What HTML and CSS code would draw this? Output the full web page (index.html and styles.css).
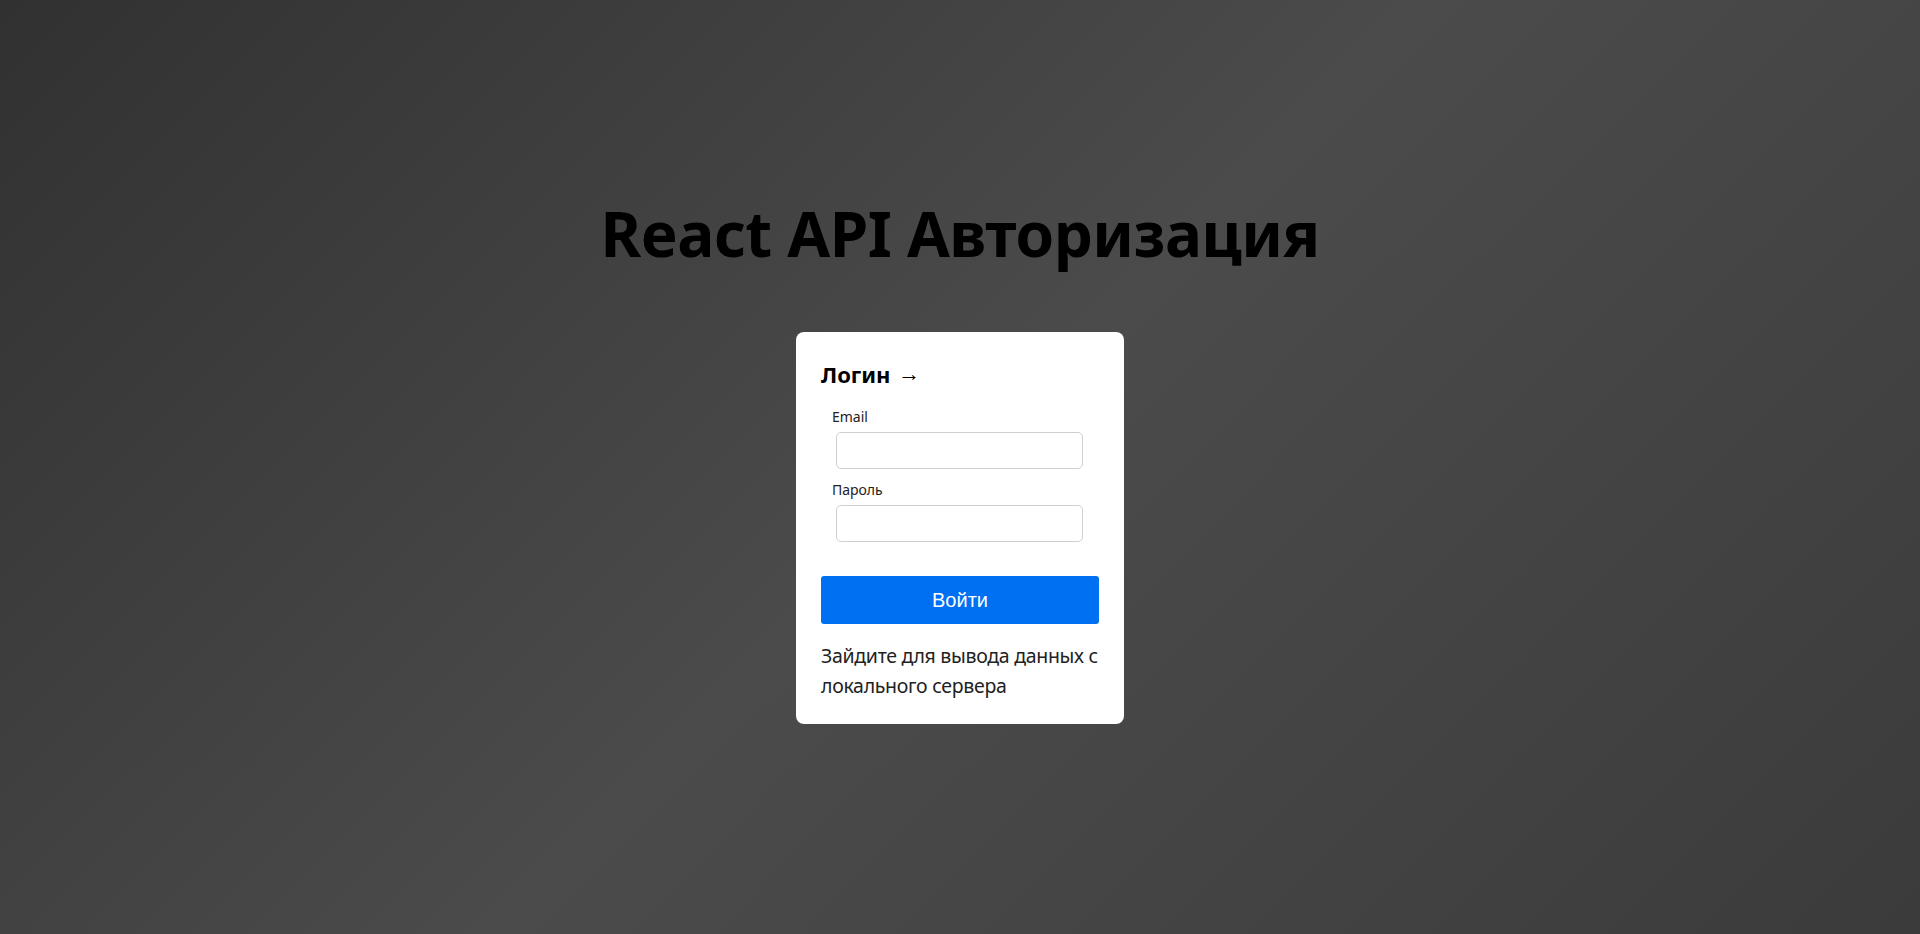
FILE: index.html
```html
<!DOCTYPE html>
<html lang="ru">
<head>
<meta charset="utf-8">
<title>React API Авторизация</title>
<link rel="stylesheet" href="styles.css">
</head>
<body>
<div class="page">
  <h1 class="title">React API Авторизация</h1>
  <div class="card">
    <h2 class="card-title">Логин <span class="arrow">→</span></h2>
    <form class="form">
      <div class="group">
        <label class="label" for="email">Email</label>
        <input class="input" id="email" type="email">
      </div>
      <div class="group">
        <label class="label" for="password">Пароль</label>
        <input class="input" id="password" type="password">
      </div>
      <button class="btn" type="button">Войти</button>
    </form>
    <p class="note">Зайдите для вывода данных с локального сервера</p>
  </div>
</div>
</body>
</html>
```

FILE: styles.css
```css
html, body {
  margin: 0;
  padding: 0;
  height: 100%;
}
body {
  background: linear-gradient(135deg, #313131 0%, #4b4b4b 50%, #3b3b3b 100%);
  font-family: "Noto Sans", "Open Sans", sans-serif;
  color: #111;
}
.page {
  display: flex;
  flex-direction: column;
  align-items: center;
  padding-top: 190px;
}
.title {
  margin: 0;
  font-size: 62px;
  font-weight: 700;
  line-height: 87px;
  letter-spacing: -0.5px;
  color: #000;
}
.card {
  margin-top: 55px;
  width: 328px;
  box-sizing: border-box;
  background: #fff;
  border-radius: 8px;
  padding: 27px 25px 23px;
}
.card-title {
  margin: 0;
  height: 30px;
  font-size: 22px;
  font-weight: 700;
  line-height: 30px;
  color: #000;
}
.arrow {
  display: inline-block;
  margin-left: 2px;
  font-weight: 400;
  line-height: 1;
  vertical-align: 2px;
}
.form {
  margin-top: 18px;
  display: flex;
  flex-direction: column;
}
.group {
  display: flex;
  flex-direction: column;
  align-items: flex-start;
  padding: 0 11px;
  margin-bottom: 11px;
}
.label {
  font-size: 14px;
  line-height: 20px;
  color: #222;
  margin-bottom: 5px;
}
.input {
  box-sizing: border-box;
  width: 247px;
  height: 37px;
  margin-left: 4px;
  border: 1px solid #cfcfcf;
  border-radius: 5px;
  background: #fff;
  padding: 0 8px;
  font-size: 14px;
}
.btn {
  margin-top: 23px;
  height: 48px;
  width: 100%;
  border: none;
  border-radius: 3px;
  background: #0070f3;
  color: #fff;
  font-family: "Liberation Sans", Arial, sans-serif;
  font-size: 20px;
}
.note {
  margin: 17px 0 0;
  font-size: 19.5px;
  line-height: 30px;
  letter-spacing: -0.3px;
  color: #222;
}
```
